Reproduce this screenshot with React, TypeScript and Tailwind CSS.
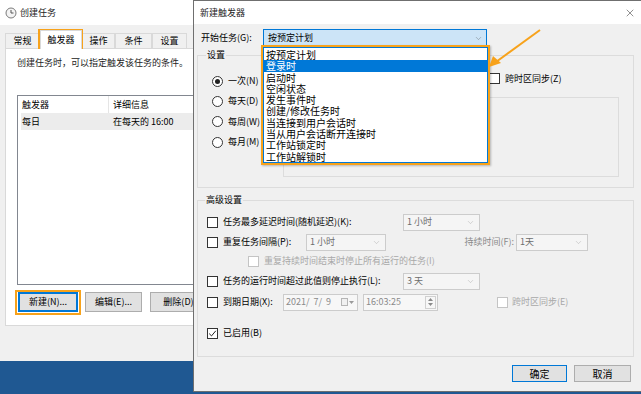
import React from "react";
import { X, ChevronDown } from "lucide-react";

const ORANGE = "#f7a21b";

function Check({ checked = false, disabled = false }: { checked?: boolean; disabled?: boolean }) {
  return (
    <div
      className={`w-[11px] h-[11px] shrink-0 border bg-white flex items-center justify-center ${
        disabled ? "border-[#c4c4c4]" : "border-[#333333]"
      }`}
    >
      {checked && (
        <svg width="9" height="9" viewBox="0 0 9 9">
          <path d="M1.2 4.6 L3.5 6.9 L7.8 1.8" fill="none" stroke="#222" strokeWidth="1" />
        </svg>
      )}
    </div>
  );
}

function Radio({ checked = false }: { checked?: boolean }) {
  return (
    <div className="w-[11px] h-[11px] shrink-0 rounded-full border border-[#333333] bg-white flex items-center justify-center">
      {checked && <div className="w-[5px] h-[5px] rounded-full bg-[#222]" />}
    </div>
  );
}

function Combo({ text, w }: { text: string; w: string }) {
  return (
    <div className={`${w} h-[17px] border border-[#cccccc] bg-[#f5f5f5] flex items-center justify-between pl-[3px] pr-[4px] text-[#6d6d6d]`}>
      <span>{text}</span>
      <ChevronDown size={9} strokeWidth={1} color="#9a9a9a" />
    </div>
  );
}

function ClockIcon() {
  return (
    <svg width="12" height="12" viewBox="0 0 12 12">
      <circle cx="6" cy="6" r="5" fill="#f4f4f4" stroke="#7a7a7a" strokeWidth="1" />
      <path d="M6 3 V6 H8.5" fill="none" stroke="#555" strokeWidth="1" />
    </svg>
  );
}

function Tab({ label, w, selected = false }: { label: string; w: string; selected?: boolean }) {
  return (
    <div
      className={`${w} flex items-center justify-center border border-[#d9d9d9] border-b-0 ${
        selected ? "h-[19px] bg-white relative z-10 -mb-px" : "h-[15px] bg-[#f0f0f0]"
      }`}
    >
      {label}
    </div>
  );
}

const items = [
  "按预定计划",
  "登录时",
  "启动时",
  "空闲状态",
  "发生事件时",
  "创建/修改任务时",
  "当连接到用户会话时",
  "当从用户会话断开连接时",
  "工作站锁定时",
  "工作站解锁时",
];

export default function App() {
  return (
    <div className="relative w-[641px] h-[394px] overflow-hidden bg-[#1f5892] font-['Noto_Sans_CJK_SC','Noto_Sans',sans-serif] text-[9px] leading-[12px] text-black">
      {/* Left window: 创建任务 */}
      <div className="absolute left-0 top-0 w-[260px] h-[361px] bg-[#f0f0f0] flex flex-col">
        <div className="h-[25px] bg-white flex items-center pl-[5px] gap-[3px]">
          <ClockIcon />
          <span className="text-[#222]">创建任务</span>
        </div>
        <div className="h-[23px] flex items-end pl-[5px]">
          <Tab label="常规" w="w-[35px]" />
          <Tab label="触发器" w="w-[42px]" selected />
          <Tab label="操作" w="w-[33px]" />
          <Tab label="条件" w="w-[37px]" />
          <Tab label="设置" w="w-[35px]" />
        </div>
        <div className="ml-[5px] w-[250px] h-[278px] bg-white border border-[#d9d9d9] flex flex-col">
          <div className="pl-[11px] pt-[8px] text-[#222]">创建任务时，可以指定触发该任务的条件。</div>
          <div className="ml-[11px] mt-[26px] h-[190px] border border-[#828790] bg-white flex flex-col">
            <div className="h-[17px] flex items-center">
              <div className="w-[91px] pl-[4px] border-r border-[#e5e5e5] h-full flex items-center">触发器</div>
              <div className="pl-[4px]">详细信息</div>
            </div>
            <div className="ml-[3px] h-[17px] bg-[#ececec] flex items-center">
              <div className="w-[88px] pl-[1px]">每日</div>
              <div className="pl-[4px]">在每天的 16:00</div>
            </div>
          </div>
          <div className="mt-[7px] ml-[12px] flex gap-[7px]">
            <div className="w-[60px] h-[20px] border border-[#0078d7] shadow-[inset_0_0_0_1px_#0078d7] bg-[#e1e1e1] flex items-center justify-center">
              新建(N)...
            </div>
            <div className="w-[57px] h-[20px] border border-[#adadad] bg-[#e1e1e1] flex items-center justify-center">
              编辑(E)...
            </div>
            <div className="ml-[1px] w-[57px] h-[20px] border border-[#adadad] bg-[#e1e1e1] flex items-center justify-center">
              删除(D)
            </div>
          </div>
        </div>
      </div>

      {/* Right dialog: 新建触发器 */}
      <div className="absolute left-[193px] top-0 w-[449px] h-[392px] bg-[#f0f0f0] border border-[#6f6f6f] flex flex-col">
        <div className="h-[23px] bg-white flex items-center justify-between pl-[6px] pr-[5px]">
          <span className="text-[#222]">新建触发器</span>
          <X size={12} strokeWidth={1} color="#222" />
        </div>
        <div className="mt-[5px] h-[18px] flex items-center">
          <div className="w-[69px] pl-[7px]">开始任务(G):</div>
          <div className="w-[224px] h-[18px] border border-[#0078d7] bg-[#cce4f7] flex items-center justify-between pl-[4px] pr-[3px]">
            <span>按预定计划</span>
            <ChevronDown size={9} strokeWidth={1} color="#555" />
          </div>
        </div>

        {/* 设置 group */}
        <div className="relative mt-[8px] ml-[3px] w-[437px] h-[133px] border border-[#dcdcdc] flex">
          <div className="absolute -top-[7px] left-[8px] bg-[#f0f0f0] px-[1px]">设置</div>
          <div className="w-[85px] pt-[15px] pl-[14px] flex flex-col">
            {[
              ["一次(N)", true],
              ["每天(D)", false],
              ["每周(W)", false],
              ["每月(M)", false],
            ].map(([t, c]) => (
              <div key={t as string} className="h-[20.3px] flex items-center gap-[5px]">
                <Radio checked={c as boolean} />
                <span>{t as string}</span>
              </div>
            ))}
          </div>
          <div className="flex flex-col pt-[17px]">
            <div className="h-[11px] pl-[206px] flex items-center gap-[5px]">
              <Check />
              <span className="whitespace-nowrap">跨时区同步(Z)</span>
            </div>
            <div className="mt-[13px] w-[336px] h-[80px] border border-[#dcdcdc]" />
          </div>
        </div>

        {/* 高级设置 group */}
        <div className="relative mt-[12px] ml-[3px] w-[437px] h-[157px] border border-[#dcdcdc] flex flex-col pl-[9px] pt-[11px]">
          <div className="absolute -top-[7px] left-[7px] bg-[#f0f0f0] px-[1px]">高级设置</div>
          <div className="h-[20px] flex items-center">
            <div className="w-[196px] flex items-center gap-[5px]">
              <Check />
              <span>任务最多延迟时间(随机延迟)(K):</span>
            </div>
            <Combo text="1 小时" w="w-[77px]" />
          </div>
          <div className="h-[20px] flex items-center">
            <div className="w-[99px] flex items-center gap-[5px]">
              <Check />
              <span>重复任务间隔(P):</span>
            </div>
            <Combo text="1 小时" w="w-[80px]" />
            <div className="w-[130px] text-right pr-[2px] text-[#8a8a8a]">持续时间(F):</div>
            <Combo text="1天" w="w-[72px]" />
          </div>
          <div className="h-[18px] flex items-center pl-[41px] gap-[5px] text-[#a8a8a8]">
            <Check disabled />
            <span>重复持续时间结束时停止所有运行的任务(I)</span>
          </div>
          <div className="h-[22px] flex items-center">
            <div className="w-[196px] flex items-center gap-[5px]">
              <Check />
              <span>任务的运行时间超过此值则停止执行(L):</span>
            </div>
            <Combo text="3 天" w="w-[77px]" />
          </div>
          <div className="h-[20px] flex items-center">
            <div className="w-[76px] flex items-center gap-[5px]">
              <Check />
              <span>到期日期(X):</span>
            </div>
            <div className="w-[75px] h-[17px] border border-[#cccccc] bg-[#f7f7f7] flex items-center justify-between pl-[2px] pr-[3px] text-[#8a8a8a]">
              <span>2021/&nbsp;&nbsp;7/&nbsp;&nbsp;9</span>
              <div className="flex items-center gap-[1px]">
                <div className="w-[7px] h-[8px] border border-[#b5b5b5] bg-[#f0f0f0]" />
                <svg width="5" height="3" viewBox="0 0 5 3">
                  <path d="M0 0 H5 L2.5 3 Z" fill="#9a9a9a" />
                </svg>
              </div>
            </div>
            <div className="ml-[5px] w-[75px] h-[17px] border border-[#cccccc] bg-[#f7f7f7] flex items-center justify-between pl-[2px] pr-[1px] text-[#8a8a8a]">
              <span>16:03:25</span>
              <div className="w-[11px] h-[13px] border border-[#d0d0d0] flex flex-col items-center justify-center gap-[2px]">
                <svg width="5" height="3" viewBox="0 0 5 3">
                  <path d="M0 3 H5 L2.5 0 Z" fill="#8a8a8a" />
                </svg>
                <svg width="5" height="3" viewBox="0 0 5 3">
                  <path d="M0 0 H5 L2.5 3 Z" fill="#8a8a8a" />
                </svg>
              </div>
            </div>
            <div className="ml-[59px] flex items-center gap-[4px] text-[#a8a8a8]">
              <Check disabled />
              <span>跨时区同步(E)</span>
            </div>
          </div>
          <div className="mt-[11px] h-[20px] flex items-center gap-[5px]">
            <Check checked />
            <span>已启用(B)</span>
          </div>
        </div>

        <div className="mt-[8px] flex justify-end pr-[10px] gap-[7px]">
          <div className="w-[55px] h-[17px] border border-[#0078d7] bg-[#e1e1e1] flex items-center justify-center text-[10px]">
            确定
          </div>
          <div className="w-[57px] h-[17px] border border-[#adadad] bg-[#e1e1e1] flex items-center justify-center text-[10px]">
            取消
          </div>
        </div>
      </div>

      {/* Dropdown list overlay */}
      <div
        className="absolute left-[261px] top-[45px] w-[229px] h-[120px] border-[2px] shadow-[1px_1px_2px_rgba(0,0,0,0.25)]"
        style={{ borderColor: ORANGE }}
      >
        <div className="w-full h-full bg-white border border-[#0078d7] pt-[1px] text-[10px] leading-[11.3px]">
          {items.map((t, i) => (
            <div
              key={t}
              className={`h-[11.3px] pl-[2px] whitespace-nowrap ${i === 1 ? "bg-[#0078d7] text-white" : "text-black"}`}
            >
              {t}
            </div>
          ))}
        </div>
      </div>

      {/* Orange highlight boxes */}
      <div className="absolute left-[38px] top-[29px] w-[45px] h-[20px] border-[2px]" style={{ borderColor: ORANGE }} />
      <div className="absolute left-[15px] top-[290px] w-[66px] h-[25px] border-[2px]" style={{ borderColor: ORANGE }} />

      {/* Arrow */}
      <svg className="absolute left-0 top-0 pointer-events-none" width="641" height="394">
        <line x1="540" y1="30" x2="496" y2="62" stroke={ORANGE} strokeWidth="2" />
        <polygon points="489,67 493,56 501,63" fill={ORANGE} />
      </svg>
    </div>
  );
}
